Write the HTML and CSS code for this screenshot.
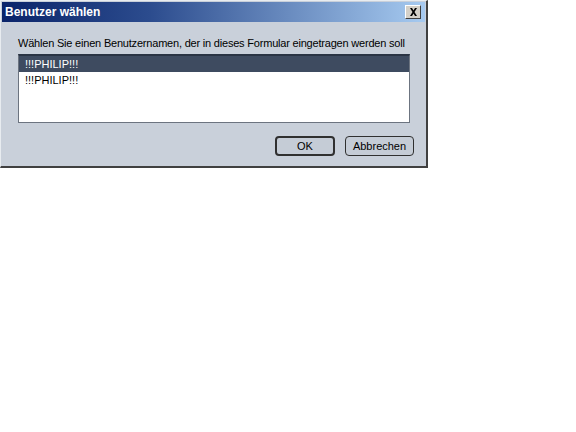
FILE: index.html
```html
<!DOCTYPE html>
<html lang="de">
<head>
    <meta charset="UTF-8">
    <title>Benutzer wählen</title>
    <link rel="stylesheet" href="styles.css">
</head>
<body>

<div class="dialog">
    <div class="titlebar">
        <span class="title">Benutzer wählen</span>
        <button class="close-btn" type="button">
            <svg width="9" height="8" viewBox="0 0 9 8"><path d="M1 0h2l1.5 2.5L6 0h2L5.5 4 8 8H6L4.5 5.5 3 8H1l2.5-4z" fill="#000"/></svg>
        </button>
    </div>
    <div class="dialog-body">
        <p class="prompt">Wählen Sie einen Benutzernamen, der in dieses Formular eingetragen werden soll</p>
        <ul class="user-list">
            <li class="selected">!!!PHILIP!!!</li>
            <li>!!!PHILIP!!!</li>
        </ul>
        <div class="buttons">
            <button class="btn default" type="button">OK</button>
            <button class="btn" type="button">Abbrechen</button>
        </div>
    </div>
</div>

</body>
</html>
```

FILE: styles.css
```css
/* Basic styling */
body {
    margin: 0;
    background-color: #fff;
    font-family: "Liberation Sans", Tahoma, sans-serif;
    font-size: 11px;
}
.dialog {
    width: 423px;
    background-color: #c9d0da;
    border: 1px solid #e8ecf0;
    border-right: 2px solid #404040;
    border-bottom: 2px solid #404040;
    padding: 1px;
}
.titlebar {
    height: 20px;
    display: flex;
    align-items: center;
    justify-content: space-between;
    padding: 0 4px 0 3px;
    background: linear-gradient(to right, #0a246a, #2c4c8e 35%, #a6caf0);
}
.title {
    color: #fff;
    font-family: "Liberation Sans", sans-serif;
    font-weight: bold;
    font-size: 12px;
}
.close-btn {
    width: 16px;
    height: 14px;
    padding: 0;
    display: flex;
    align-items: center;
    justify-content: center;
    background-color: #d4d0c8;
    border: 1px solid;
    border-color: #fff #404040 #404040 #fff;
}
.dialog-body {
    padding: 15px 15px 9px 16px;
}
.prompt {
    margin: 0 0 5px 0;
    color: #000;
    font-size: 11px;
    letter-spacing: -0.2px;
    white-space: nowrap;
}
.user-list {
    list-style: none;
    margin: 0;
    padding: 0;
    height: 66px;
    background-color: #fff;
    border: 1px solid #6c7480;
    border-top: 2px solid #2a3444;
}
.user-list li {
    height: 16px;
    line-height: 16px;
    padding-left: 6px;
    color: #000;
}
.user-list li.selected {
    background-color: #3e4b60;
    color: #fff;
}
.buttons {
    display: flex;
    justify-content: flex-end;
    gap: 10px;
    margin-top: 13px;
    margin-right: -4px;
}
.btn {
    height: 20px;
    min-width: 69px;
    padding: 0 5px;
    font-family: "Liberation Sans", sans-serif;
    font-size: 11px;
    color: #000;
    background-color: #c5ccd6;
    border: 1px solid #303030;
    border-radius: 4px;
}
.btn.default {
    width: 60px;
    min-width: 60px;
    border-width: 2px;
}
```
